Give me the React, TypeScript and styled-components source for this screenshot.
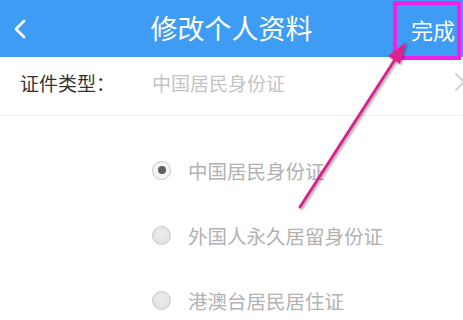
import React from "react";
import styled, { createGlobalStyle } from "styled-components";

const Global = createGlobalStyle`
  html, body { margin: 0; padding: 0; background: #fff; }
  body { font-family: "Noto Sans CJK SC", "Noto Sans", sans-serif; overflow: hidden; }
`;

const Page = styled.div`
  position: relative;
  width: 463px;
  height: 320px;
  overflow: hidden;
  background: #fff;
`;

const Header = styled.header`
  height: 57px;
  background: #3e9cf5;
  display: grid;
  grid-template-columns: 1fr auto 1fr;
  align-items: center;
  color: #fff;
`;

const Back = styled.div`
  padding-left: 12px;
  display: flex;
  align-items: center;
`;

const Title = styled.h1`
  margin: 0;
  font-size: 27px;
  font-weight: 400;
  line-height: 1;
  transform: translateY(-1px);
`;

const Done = styled.div`
  justify-self: end;
  padding-right: 8px;
  font-size: 22px;
  line-height: 1;
`;

const Row = styled.div`
  height: 59px;
  box-sizing: border-box;
  padding-bottom: 8px;
  display: flex;
  align-items: center;
  border-bottom: 1px solid #efefef;
  overflow: hidden;
`;

const Label = styled.span`
  width: 152px;
  padding-left: 20px;
  box-sizing: border-box;
  font-size: 19px;
  color: #333;
  flex-shrink: 0;
`;

const Value = styled.span`
  flex: 1;
  font-size: 19px;
  color: #c4c4c4;
`;

const Chevron = styled.svg`
  margin-right: -6px;
  flex-shrink: 0;
`;

const Options = styled.div`
  padding: 35px 0 0 152px;
  display: flex;
  flex-direction: column;
  gap: 27px;
`;

const Option = styled.label`
  display: flex;
  align-items: center;
  gap: 17px;
  height: 38px;
  font-size: 19.5px;
  color: #b2b2b2;
`;

const Radio = styled.span<{ $checked?: boolean }>`
  width: 19px;
  height: 19px;
  border-radius: 50%;
  box-sizing: border-box;
  border: 1.5px solid #c8c8c8;
  background: ${(p) => (p.$checked ? "#f4f4f4" : "radial-gradient(circle at 50% 40%, #eeeeee, #dcdcdc)")};
  display: flex;
  align-items: center;
  justify-content: center;
  &::after {
    content: "";
    display: ${(p) => (p.$checked ? "block" : "none")};
    width: 8px;
    height: 8px;
    border-radius: 50%;
    background: #5e5e5e;
  }
`;

const Highlight = styled.div`
  position: absolute;
  left: 393px;
  top: 1px;
  width: 68px;
  height: 59px;
  box-sizing: border-box;
  border: 4px solid #f020e8;
  pointer-events: none;
`;

const ArrowLayer = styled.svg`
  position: absolute;
  left: 0;
  top: 0;
  pointer-events: none;
`;

export default function App() {
  const options = [
    { text: "中国居民身份证", checked: true },
    { text: "外国人永久居留身份证", checked: false },
    { text: "港澳台居民居住证", checked: false },
  ];
  return (
    <Page>
      <Global />
      <Header>
        <Back>
          <svg width="16" height="22" viewBox="0 0 16 22">
            <path d="M12 3 L4 11 L12 19" fill="none" stroke="#fff" strokeWidth="2.6" strokeLinecap="round" strokeLinejoin="round" />
          </svg>
        </Back>
        <Title>修改个人资料</Title>
        <Done>完成</Done>
      </Header>
      <Row>
        <Label>证件类型：</Label>
        <Value>中国居民身份证</Value>
        <Chevron width="16" height="24" viewBox="0 0 16 24">
          <path d="M3 4 L11 12 L3 20" fill="none" stroke="#d4d4d4" strokeWidth="2" strokeLinecap="round" strokeLinejoin="round" />
        </Chevron>
      </Row>
      <Options>
        {options.map((o) => (
          <Option key={o.text}>
            <Radio $checked={o.checked} />
            {o.text}
          </Option>
        ))}
      </Options>
      <Highlight />
      <ArrowLayer width="463" height="320" viewBox="0 0 463 320">
        <defs>
          <filter id="sh" x="-20%" y="-20%" width="140%" height="140%">
            <feDropShadow dx="1.5" dy="1.5" stdDeviation="1.2" floodColor="#000" floodOpacity="0.35" />
          </filter>
        </defs>
        <g filter="url(#sh)">
          <line x1="300" y1="207" x2="396" y2="58" stroke="#d8248e" strokeWidth="3" strokeLinecap="round" />
          <polygon points="406,42 388,56 400,64" fill="#e0208f" />
        </g>
      </ArrowLayer>
    </Page>
  );
}
